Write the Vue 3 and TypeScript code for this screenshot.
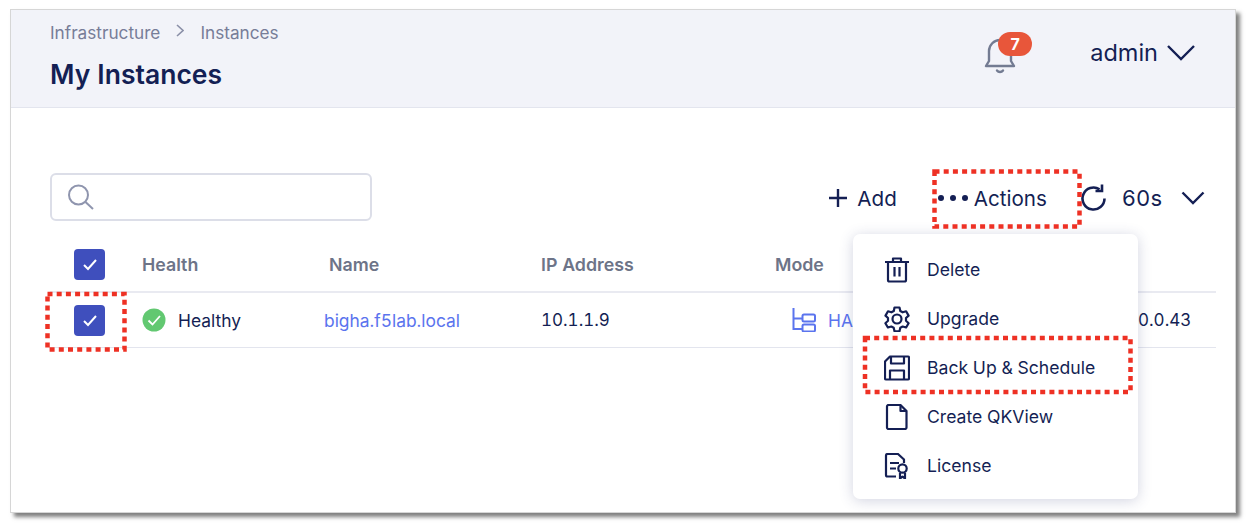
<script setup lang="ts">
interface MenuItem {
  label: string;
  icon: string;
}

const menuItems: MenuItem[] = [
  { label: 'Delete', icon: 'trash' },
  { label: 'Upgrade', icon: 'gear' },
  { label: 'Back Up & Schedule', icon: 'save' },
  { label: 'Create QKView', icon: 'file' },
  { label: 'License', icon: 'license' }
];

const columns = ['Health', 'Name', 'IP Address', 'Mode'];
</script>

<template>
  <div class="page">
    <div class="frame">
      <header class="top">
        <div class="titles">
          <div class="crumbs">
            <span>Infrastructure</span>
            <svg class="crumb-sep" width="8" height="13" viewBox="0 0 8 13" fill="none">
              <path d="M1 1l6 5.500-6 5.500" stroke="#8b90a8" stroke-width="1.600" />
            </svg>
            <span>Instances</span>
          </div>
          <h1>My Instances</h1>
        </div>
        <div class="top-right">
          <div class="bell">
            <svg width="36" height="38" viewBox="0 0 36 38" fill="none" stroke="#737b92" stroke-width="2.400" stroke-linejoin="round" stroke-linecap="round">
              <path d="M3 30h28l-3-5V15c0-6-5-11-11-11S6 9 6 15v10z" />
              <path d="M14 34.500c1.500 2 4.500 2 6 0" />
            </svg>
            <span class="badge">7</span>
          </div>
          <div class="user">
            <span>admin</span>
            <svg width="30" height="18" viewBox="0 0 30 18" fill="none">
              <path d="M2 2l13 13L28 2" stroke="#141f54" stroke-width="2.400" />
            </svg>
          </div>
        </div>
      </header>

      <main class="body">
        <div class="toolbar">
          <div class="search">
            <svg width="28" height="28" viewBox="0 0 28 28" fill="none" stroke="#8f95ae" stroke-width="2">
              <circle cx="10.500" cy="12" r="9.500" />
              <path d="M17.500 19l7.500 7" />
            </svg>
          </div>
          <div class="tools">
            <button class="tool add">
              <svg width="20" height="20" viewBox="0 0 20 20" fill="none">
                <path d="M10 1v18M1 10h18" stroke="#141f54" stroke-width="2.400" />
              </svg>
              Add
            </button>
            <button class="tool actions">
              <span class="dots"><i></i><i></i><i></i></span>
              Actions
            </button>
            <button class="tool refresh">
              <svg width="28" height="30" viewBox="0 0 28 30" fill="none" stroke="#141f54" stroke-width="2.600">
                <path d="M23.500 15.500A11 11 0 1 1 18.500 6.300" />
                <path d="M21 1.500v6.500h-6.500" />
              </svg>
              <span class="secs">60s</span>
              <svg class="secs-arrow" width="24" height="14" viewBox="0 0 24 14" fill="none">
                <path d="M1.500 1.500L12 12 22.500 1.500" stroke="#141f54" stroke-width="2.400" />
              </svg>
            </button>
          </div>
        </div>

        <div class="table">
          <div class="row head">
            <span class="check"><svg width="16" height="13" viewBox="0 0 16 13" fill="none"><path d="M2 7l4 4 8-9" stroke="#fff" stroke-width="2" /></svg></span>
            <span v-for="col in columns" :key="col" class="cell">{{ col }}</span>
          </div>
          <div class="row data">
            <span class="check"><svg width="16" height="13" viewBox="0 0 16 13" fill="none"><path d="M2 7l4 4 8-9" stroke="#fff" stroke-width="2" /></svg></span>
            <span class="cell health">
              <svg width="24" height="24" viewBox="0 0 24 24" fill="none">
                <circle cx="12" cy="12" r="11.500" fill="#62c871" />
                <path d="M6.500 12.500l4 4 7.500-8.500" stroke="#fff" stroke-width="1.800" />
              </svg>
              Healthy
            </span>
            <span class="cell link">bigha.f5lab.local</span>
            <span class="cell num">10.1.1.9</span>
            <span class="cell mode">
              <svg width="24" height="24" viewBox="0 0 24 24" fill="none" stroke="#5b74ee" stroke-width="2">
                <path d="M1.500 0v21h9M1.500 10.500h9" />
                <rect x="10.500" y="6.500" width="12.500" height="7" rx="1.500" />
                <rect x="10.500" y="16.500" width="12.500" height="7" rx="1.500" />
              </svg>
              HA
            </span>
            <span class="cell num version">10.0.43</span>
          </div>
        </div>
      </main>

      <ul class="menu">
        <li v-for="item in menuItems" :key="item.label">
          <svg width="26" height="26" viewBox="0 0 26 26" fill="none" stroke="#141f54" stroke-width="2.200" stroke-linejoin="round">
            <template v-if="item.icon === 'trash'">
              <path d="M1 5h24M9 5V1.500h8V5M4 5v18a1.500 1.500 0 0 0 1.500 1.500h15A1.500 1.500 0 0 0 22 23V5M10.500 10v9.500M15.500 10v9.500" />
            </template>
            <template v-else-if="item.icon === 'gear'">
              <path d="M10.500 1.500h5l.8 3.500 2.400 1.300 3.400-1 2.500 4.300-2.600 2.400v2.800l2.600 2.400-2.500 4.300-3.400-1-2.400 1.300-.8 3.500h-5l-.8-3.500-2.400-1.300-3.400 1-2.500-4.300 2.600-2.400V12L1.500 9.600 4 5.300l3.400 1L9.800 5z" />
              <circle cx="13" cy="13" r="4.500" />
            </template>
            <template v-else-if="item.icon === 'save'">
              <path d="M6 1.500h18a1 1 0 0 1 1 1v21a1 1 0 0 1-1 1H2a1 1 0 0 1-1-1V6.500z" />
              <path d="M7 2v6.500h13V2M6 24.500v-9h14v9" />
            </template>
            <template v-else-if="item.icon === 'file'">
              <path d="M4.500 1h12l6 6v16.500a1.500 1.500 0 0 1-1.500 1.500H4.500A1.500 1.500 0 0 1 3 23.500v-21A1.500 1.500 0 0 1 4.500 1z" />
              <path d="M16.500 1v6h6" />
            </template>
            <template v-else>
              <path d="M12 23.500H3.500A1.500 1.500 0 0 1 2 22v-19.500A1.500 1.500 0 0 1 3.500 1H14l6 5.500v3.500" />
              <path d="M6 10h9M6 15.500h6" />
              <circle cx="18.500" cy="15.500" r="4.200" />
              <path d="M16 20v5.500l2.500-1.800 2.500 1.800V20" />
            </template>
          </svg>
          <span>{{ item.label }}</span>
        </li>
      </ul>

      <!-- red callouts drawn over the screenshot -->
      <svg class="callouts" width="1224" height="502" fill="none" stroke="#ee3124" stroke-width="4.500" stroke-dasharray="5 4.200">
        <rect x="923.500" y="161.500" width="145" height="55" />
        <rect x="36.500" y="284" width="77" height="55.500" />
        <rect x="854" y="328" width="265.500" height="54" />
      </svg>
    </div>
  </div>
</template>

<style>
html,
body {
  margin: 0;
  background: #fff;
}
</style>

<style scoped>
.page {
  box-sizing: border-box;
  width: 1254px;
  height: 528px;
  padding: 9px 0 0 10px;
  background: #fff;
}
.frame {
  position: relative;
  width: 1224px;
  height: 502px;
  border: 1px solid #d6d6d6;
  box-shadow: 4px 4px 4px rgba(0, 0, 0, 0.5);
  background: #fff;
  font-family: Inter, "Liberation Sans", sans-serif;
  font-variant-numeric: tabular-nums;
  color: #141f54;
  overflow: hidden;
}

.top {
  display: flex;
  justify-content: space-between;
  height: 97px;
  padding: 0 39px 0 39px;
  background: #f2f3f9;
  border-bottom: 1px solid #e3e5ee;
}
.crumbs {
  display: flex;
  align-items: center;
  gap: 16px;
  margin-top: 11px;
  font-size: 17.200px;
  line-height: 24px;
  color: #777d98;
}
.crumb-sep {
  margin-top: -5px;
}
h1 {
  margin: 12px 0 0;
  font-size: 26.500px;
  line-height: 34px;
  font-weight: 600;
}
.top-right {
  display: flex;
  align-items: flex-start;
}
.bell {
  position: relative;
  width: 36px;
  height: 38px;
  margin-top: 26px;
  margin-right: 71px;
}
.badge {
  position: absolute;
  top: -4px;
  left: 15px;
  width: 34px;
  height: 24px;
  border-radius: 12px;
  background: #e8563a;
  color: #fff;
  font-size: 16px;
  font-weight: 700;
  line-height: 24px;
  text-align: center;
}
.user {
  display: flex;
  align-items: center;
  gap: 8px;
  margin-top: 27px;
  font-size: 23.500px;
  line-height: 32px;
}

.body {
  padding: 65px 19px 0 39px;
}
.toolbar {
  display: flex;
  justify-content: space-between;
  height: 50px;
}
.search {
  display: flex;
  align-items: center;
  box-sizing: border-box;
  width: 322px;
  height: 48px;
  padding-left: 16px;
  border: 2px solid #dcdee8;
  border-radius: 6px;
}
.tools {
  display: flex;
  align-items: center;
}
.tool {
  display: flex;
  align-items: center;
  padding: 0;
  border: 0;
  background: none;
  color: inherit;
  font: inherit;
  font-size: 20.600px;
}
.add {
  gap: 9px;
  margin-right: 41px;
}
.actions {
  gap: 6px;
  margin-right: 34px;
}
.dots {
  display: flex;
  gap: 6px;
}
.dots i {
  width: 6px;
  height: 6px;
  border-radius: 50%;
  background: #141f54;
}
.refresh {
  margin-right: 11px;
}
.secs {
  margin-left: 13px;
  font-size: 22px;
}
.secs-arrow {
  margin-left: 19px;
}

.table {
  margin-top: 25px;
}
.row {
  display: grid;
  grid-template-columns: 92px 187px 212px 234px 355px 1fr;
  align-items: center;
  font-size: 17.400px;
}
.check {
  display: flex;
  align-items: center;
  justify-content: center;
  width: 31px;
  height: 31px;
  margin-left: 24px;
  border-radius: 4px;
  background: #3f4fbd;
}
.head {
  height: 33px;
  padding-bottom: 10px;
  border-bottom: 2px solid #e9eaf1;
  color: #6d7488;
  font-size: 17.800px;
  font-weight: 600;
}
.data {
  height: 54px;
  border-bottom: 1px solid #e3e5ee;
}
.health {
  display: flex;
  align-items: center;
  gap: 12px;
}
.link {
  margin-left: -5px;
  color: #5b74ee;
}
.num {
  font-size: 17px;
}
.mode {
  display: flex;
  align-items: center;
  gap: 12px;
  margin-left: 17px;
  color: #5b74ee;
}
.version {
  margin-left: -3px;
}

.menu {
  position: absolute;
  left: 842px;
  top: 224px;
  box-sizing: border-box;
  width: 285px;
  height: 265px;
  margin: 0;
  padding: 11px 0 0;
  list-style: none;
  border-radius: 7px;
  background: #fff;
  box-shadow: 0 2px 14px rgba(50, 60, 120, 0.22);
}
.menu li {
  display: flex;
  align-items: center;
  gap: 17px;
  height: 49px;
  padding-left: 31px;
  font-size: 17.600px;
}

.callouts {
  position: absolute;
  left: 0;
  top: 0;
  pointer-events: none;
}
</style>
